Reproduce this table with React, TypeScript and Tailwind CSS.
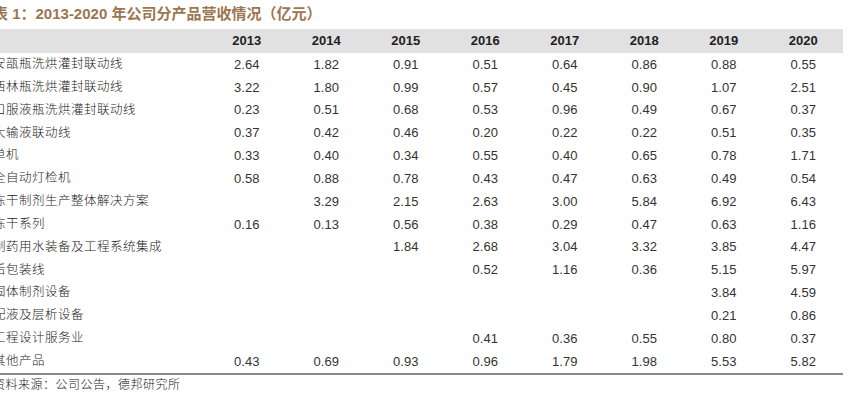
const years = ["2013", "2014", "2015", "2016", "2017", "2018", "2019", "2020"];

const rows: [string, string[]][] = [
  ["安瓿瓶洗烘灌封联动线", ["2.64", "1.82", "0.91", "0.51", "0.64", "0.86", "0.88", "0.55"]],
  ["西林瓶洗烘灌封联动线", ["3.22", "1.80", "0.99", "0.57", "0.45", "0.90", "1.07", "2.51"]],
  ["口服液瓶洗烘灌封联动线", ["0.23", "0.51", "0.68", "0.53", "0.96", "0.49", "0.67", "0.37"]],
  ["大输液联动线", ["0.37", "0.42", "0.46", "0.20", "0.22", "0.22", "0.51", "0.35"]],
  ["单机", ["0.33", "0.40", "0.34", "0.55", "0.40", "0.65", "0.78", "1.71"]],
  ["全自动灯检机", ["0.58", "0.88", "0.78", "0.43", "0.47", "0.63", "0.49", "0.54"]],
  ["冻干制剂生产整体解决方案", ["", "3.29", "2.15", "2.63", "3.00", "5.84", "6.92", "6.43"]],
  ["冻干系列", ["0.16", "0.13", "0.56", "0.38", "0.29", "0.47", "0.63", "1.16"]],
  ["制药用水装备及工程系统集成", ["", "", "1.84", "2.68", "3.04", "3.32", "3.85", "4.47"]],
  ["后包装线", ["", "", "", "0.52", "1.16", "0.36", "5.15", "5.97"]],
  ["固体制剂设备", ["", "", "", "", "", "", "3.84", "4.59"]],
  ["配液及层析设备", ["", "", "", "", "", "", "0.21", "0.86"]],
  ["工程设计服务业", ["", "", "", "0.41", "0.36", "0.55", "0.80", "0.37"]],
  ["其他产品", ["0.43", "0.69", "0.93", "0.96", "1.79", "1.98", "5.53", "5.82"]],
];

const grid = "grid grid-cols-[214px_repeat(8,79.5px)]";
const cjk = "font-['Liberation_Sans','Noto_Sans_CJK_SC',sans-serif]";

export default function App() {
  return (
    <div className={`w-[860px] h-[409px] overflow-hidden bg-white ${cjk}`}>
      <div className="-ml-[7px] w-[850px]">
        <div className="h-[29px] pt-[5px] text-[15px] font-bold leading-[18px] text-[#9b7650]">
          表 1：2013-2020 年公司分产品营收情况（亿元）
        </div>
        <div className={`${grid} h-[24px] items-center bg-[#e1e1e1] text-[13px] font-bold text-[#222]`}>
          <div />
          {years.map((y) => (
            <div key={y} className="text-center">{y}</div>
          ))}
        </div>
        <div className="border-b-2 border-[#8a8a8a]">
          {rows.map(([label, vals]) => (
            <div key={label} className={`${grid} h-[22.85px] items-center text-[13px] text-[#333]`}>
              <div className="text-[12.5px] font-light tracking-[0.5px] text-[#222] whitespace-nowrap">{label}</div>
              {vals.map((v, i) => (
                <div key={i} className="text-center">{v}</div>
              ))}
            </div>
          ))}
        </div>
        <div className="pt-[2px] text-[12px] font-light tracking-[0.5px] text-[#222] leading-[16px]">
          资料来源：公司公告，德邦研究所
        </div>
      </div>
    </div>
  );
}
